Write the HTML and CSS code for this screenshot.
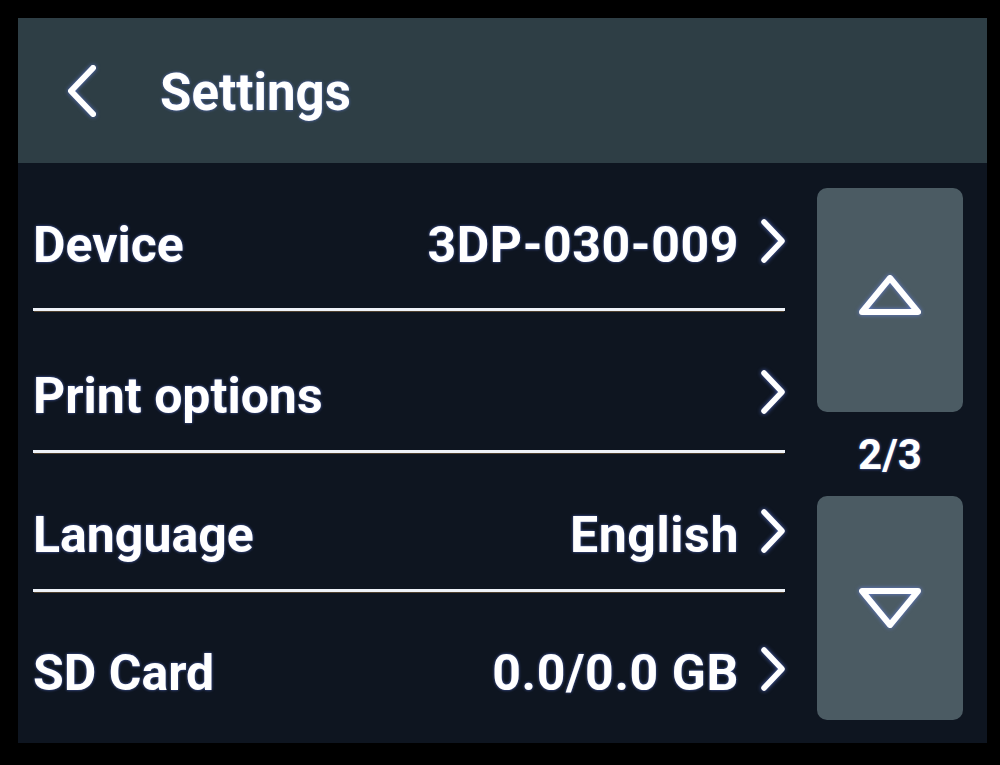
FILE: index.html
```html
<!DOCTYPE html>
<html lang="en">
<head>
<meta charset="utf-8">
<title>Settings</title>
<link rel="stylesheet" href="styles.css">
</head>
<body>
<div class="screen">
  <header class="topbar">
    <svg class="back" width="30" height="54" viewBox="0 0 30 54" aria-hidden="true">
      <path d="M26 4 L4 27 L26 50" fill="none" stroke="#fff" stroke-width="6" stroke-linecap="round" stroke-linejoin="round"/>
    </svg>
    <h1 class="title">Settings</h1>
  </header>
  <div class="main">
    <ul class="list">
      <li class="row">
        <span class="label">Device</span>
        <span class="value">3DP-030-009</span>
        <svg class="chev" width="28" height="46" viewBox="0 0 28 46" aria-hidden="true"><path d="M5 4 L23 23 L5 42" fill="none" stroke="#fff" stroke-width="5.5" stroke-linecap="round" stroke-linejoin="round"/></svg>
      </li>
      <li class="row">
        <span class="label">Print options</span>
        <span class="value"></span>
        <svg class="chev" width="28" height="46" viewBox="0 0 28 46" aria-hidden="true"><path d="M5 4 L23 23 L5 42" fill="none" stroke="#fff" stroke-width="5.5" stroke-linecap="round" stroke-linejoin="round"/></svg>
      </li>
      <li class="row">
        <span class="label">Language</span>
        <span class="value">English</span>
        <svg class="chev" width="28" height="46" viewBox="0 0 28 46" aria-hidden="true"><path d="M5 4 L23 23 L5 42" fill="none" stroke="#fff" stroke-width="5.5" stroke-linecap="round" stroke-linejoin="round"/></svg>
      </li>
      <li class="row">
        <span class="label">SD Card</span>
        <span class="value">0.0/0.0 GB</span>
        <svg class="chev" width="28" height="46" viewBox="0 0 28 46" aria-hidden="true"><path d="M5 4 L23 23 L5 42" fill="none" stroke="#fff" stroke-width="5.5" stroke-linecap="round" stroke-linejoin="round"/></svg>
      </li>
    </ul>
    <div class="pager">
      <button class="pbtn" type="button" aria-label="Page up">
        <svg width="66" height="44" viewBox="0 0 66 44" aria-hidden="true"><path d="M33 5 L61 39 L5 39 Z" fill="none" stroke="#fff" stroke-width="6" stroke-linejoin="round"/></svg>
      </button>
      <div class="pnum">2/3</div>
      <button class="pbtn" type="button" aria-label="Page down">
        <svg width="66" height="44" viewBox="0 0 66 44" aria-hidden="true"><path d="M5 5 L61 5 L33 39 Z" fill="none" stroke="#fff" stroke-width="6" stroke-linejoin="round"/></svg>
      </button>
    </div>
  </div>
</div>
</body>
</html>
```
FILE: styles.css
```css
* { box-sizing: border-box; }
html, body {
  margin: 0;
  padding: 0;
  background: #000;
}
body {
  width: 1000px;
  height: 765px;
  padding: 18px 0 0 18px;
  font-family: Roboto, "Noto Sans", "Liberation Sans", sans-serif;
  color: #fff;
}
.screen {
  width: 969px;
  height: 725px;
  background: #0e1520;
  display: flex;
  flex-direction: column;
}
.topbar {
  height: 145px;
  flex: none;
  background: #2e3e45;
  display: flex;
  align-items: center;
  padding-left: 49px;
  padding-top: 4px;
  gap: 63px;
}
.back {
  display: block;
  margin-top: -4px;
  filter: drop-shadow(0 0 2px rgba(110, 140, 255, 0.7));
}
.title {
  margin: 0;
  font-size: 51px;
  line-height: 1;
  font-weight: 700;
  text-shadow: 0 0 3px rgba(110, 140, 255, 0.7);
}
.main {
  flex: 1;
  display: flex;
}
.list {
  list-style: none;
  margin: 0;
  padding: 0 0 0 15px;
  width: 767px;
  display: grid;
  grid-template-rows: 148px 142px 139px 1fr;
}
.row {
  display: flex;
  align-items: flex-end;
  padding-bottom: 29px;
  border-bottom: 3px solid #eef2f8;
  box-shadow: 0 2px 0 -1px rgba(200, 150, 80, 0.35);
}
.row:first-child { padding-bottom: 38px; }
.row:last-child {
  border-bottom: none;
  box-shadow: none;
  padding-bottom: 45px;
}
.label, .value {
  font-size: 50px;
  line-height: 50px;
  font-weight: 700;
  text-shadow: 0 0 3px rgba(110, 140, 255, 0.7);
  white-space: nowrap;
}
.label { flex: 1; }
.value {
  margin-right: 20px;
  letter-spacing: 0.6px;
}
.chev {
  display: block;
  flex: none;
  margin-bottom: 6px;
  margin-right: -2px;
  filter: drop-shadow(0 0 2px rgba(110, 140, 255, 0.7));
}
.pager {
  width: 146px;
  margin-left: 32px;
  padding: 25px 0 23px;
  display: flex;
  flex-direction: column;
}
.pbtn {
  height: 224px;
  flex: none;
  border: none;
  border-radius: 10px;
  background: #4b5b63;
  display: flex;
  align-items: center;
  justify-content: center;
  padding: 0;
}
.pbtn svg {
  display: block;
  filter: drop-shadow(0 0 2px rgba(110, 140, 255, 0.7));
}
.pbtn:first-child svg { margin-top: -10px; }
.pnum {
  flex: 1;
  display: flex;
  align-items: center;
  justify-content: center;
  font-size: 42px;
  font-weight: 700;
  line-height: 1;
  padding-top: 2px;
  text-shadow: 0 0 3px rgba(110, 140, 255, 0.7);
}
```
